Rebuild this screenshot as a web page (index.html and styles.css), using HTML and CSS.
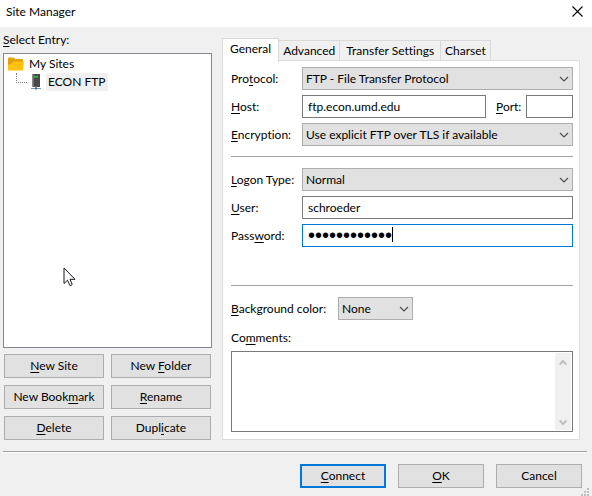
FILE: index.html
```html
<!DOCTYPE html>
<html lang="en">
<head>
    <meta charset="UTF-8">
    <meta name="viewport" content="width=device-width, initial-scale=1.0">
    <title>Site Manager</title>
    <link rel="stylesheet" href="styles.css">
</head>
<body>
    <header class="titlebar">
        <h1>Site Manager</h1>
        <button type="button" class="close" aria-label="Close">
            <svg width="11" height="11" viewBox="0 0 11 11"><path d="M.5 .5l10 10M10.5 .5l-10 10" stroke="#000" stroke-width="1.1"/></svg>
        </button>
    </header>

    <main class="content">
        <section class="sidebar">
            <h2><u>S</u>elect Entry:</h2>
            <div class="tree">
                <div class="tree-row">
                    <svg width="17" height="14" viewBox="0 0 17 14"><path d="M0 1.500Q0 .5 1 .5h4.500L7 2h7q1 0 1 1v10H0z" fill="#e3a008"/><path d="M4 6l1-1.500h11L15 13.500H0V7.500h2.500z" fill="#ffc20e"/></svg>
                    <span>My Sites</span>
                </div>
                <div class="tree-row child">
                    <span class="branch"></span>
                    <svg width="10" height="16" viewBox="0 0 10 16"><path d="M1 0h8v13H1z" fill="#4a4a4a"/><path d="M1 0h1.500v13H1z" fill="#8a8a8a"/><path d="M3 2h4v1.500H3z" fill="#2fc12f"/><path d="M5 12v2" stroke="#777"/><path d="M0 14.500h10" stroke="#7d97a8"/><path d="M4 13.500h2v2H4z" fill="#2f6f9f"/></svg>
                    <span class="selected">ECON FTP</span>
                </div>
                <svg class="pointer" width="13" height="20" viewBox="0 0 13 20"><path d="M1 1v15.500l3.500-3.300 2.300 5.100q1.200.7 2.400-.8L7 12.300h5z" fill="#fff" stroke="#15151f"/></svg>
            </div>
            <div class="actions">
                <button type="button"><u>N</u>ew Site</button>
                <button type="button">New <u>F</u>older</button>
                <button type="button">New Book<u>m</u>ark</button>
                <button type="button"><u>R</u>ename</button>
                <button type="button"><u>D</u>elete</button>
                <button type="button">Dupl<u>i</u>cate</button>
            </div>
        </section>

        <section class="settings">
            <div class="tabs" role="tablist">
                <button type="button" class="tab active" role="tab" aria-selected="true">General</button>
                <button type="button" class="tab" role="tab">Advanced</button>
                <button type="button" class="tab wide" role="tab">Transfer Settings</button>
                <button type="button" class="tab" role="tab">Charset</button>
            </div>
            <form class="panel" role="tabpanel">
                <div class="row">
                    <label for="protocol">Pro<u>t</u>ocol:</label>
                    <div class="dropdown">
                        <select id="protocol"><option>FTP - File Transfer Protocol</option></select>
                        <svg width="10" height="6" viewBox="0 0 10 6"><path d="M1 1l4 4 4-4"/></svg>
                    </div>
                </div>
                <div class="row">
                    <label for="host"><u>H</u>ost:</label>
                    <input type="text" id="host" value="ftp.econ.umd.edu">
                    <label class="port-label" for="port"><u>P</u>ort:</label>
                    <input type="text" class="port" id="port">
                </div>
                <div class="row">
                    <label for="encryption"><u>E</u>ncryption:</label>
                    <div class="dropdown">
                        <select id="encryption"><option>Use explicit FTP over TLS if available</option></select>
                        <svg width="10" height="6" viewBox="0 0 10 6"><path d="M1 1l4 4 4-4"/></svg>
                    </div>
                </div>
                <hr>
                <div class="row">
                    <label for="logon"><u>L</u>ogon Type:</label>
                    <div class="dropdown">
                        <select id="logon"><option>Normal</option></select>
                        <svg width="10" height="6" viewBox="0 0 10 6"><path d="M1 1l4 4 4-4"/></svg>
                    </div>
                </div>
                <div class="row">
                    <label for="user"><u>U</u>ser:</label>
                    <input type="text" id="user" value="schroeder">
                </div>
                <div class="row">
                    <label for="password">Pass<u>w</u>ord:</label>
                    <div class="password">
                        <input type="password" id="password" value="abcdefghijkl">
                        <span class="caret"></span>
                    </div>
                </div>
                <hr class="low">
                <div class="row color-row">
                    <label for="color"><u>B</u>ackground color:</label>
                    <div class="dropdown">
                        <select id="color"><option>None</option></select>
                        <svg width="10" height="6" viewBox="0 0 10 6"><path d="M1 1l4 4 4-4"/></svg>
                    </div>
                </div>
                <label class="comments-label" for="comments">Co<u>m</u>ments:</label>
                <div class="comments">
                    <textarea id="comments"></textarea>
                    <div class="scrollbar">
                        <svg width="8" height="7" viewBox="0 0 8 7"><path d="M.7 5.500L4 2l3.300 3.500"/></svg>
                        <svg width="8" height="7" viewBox="0 0 8 7"><path d="M.7 1.500L4 5l3.300-3.500"/></svg>
                    </div>
                </div>
            </form>
        </section>
    </main>

    <footer class="footer">
        <button type="button" class="default"><u>C</u>onnect</button>
        <button type="button"><u>O</u>K</button>
        <button type="button">Cancel</button>
        <svg class="grip" width="8" height="8" viewBox="0 0 8 8"><path d="M6 0h2v2H6zM3 3h2v2H3zM6 3h2v2H6zM0 6h2v2H0zM3 6h2v2H3zM6 6h2v2H6z" fill="#bfbfbf"/></svg>
    </footer>
</body>
</html>
```
FILE: styles.css
```css
* {
    box-sizing: border-box;
}
body {
    margin: 0;
    min-height: 100vh;
    display: flex;
    flex-direction: column;
    background-color: #f0f0f0;
    color: #000;
    font-family: Lato, "Open Sans", sans-serif;
    font-size: 12px;
    line-height: 16px;
    font-variant-ligatures: none;
}
h1, h2 {
    margin: 0;
    font-size: 12px;
    font-weight: 400;
}
button, input, select, textarea {
    margin: 0;
    font: inherit;
    font-variant-ligatures: none;
    color: inherit;
    border-radius: 0;
    outline: none;
}
u {
    text-underline-offset: 2px;
    text-decoration-thickness: 1px;
}
svg {
    display: block;
    flex: none;
}
button {
    height: 24px;
    padding: 0;
    background-color: #e1e1e1;
    border: 1px solid #adadad;
    white-space: nowrap;
}
.titlebar {
    display: flex;
    justify-content: space-between;
    height: 27px;
    padding: 4px 9px 0 6px;
    background-color: #fff;
}
.titlebar .close {
    height: 15px;
    background: none;
    border: none;
}
.content {
    flex: 1;
    display: flex;
    gap: 10px;
    padding: 5px 12px 11px 3px;
}
.sidebar {
    flex: none;
    width: 209px;
    display: flex;
    flex-direction: column;
}
.tree {
    position: relative;
    flex: 1;
    margin-top: 5px;
    padding: 1px 4px;
    background-color: #fff;
    border: 1px solid #828790;
}
.tree-row {
    display: flex;
    align-items: center;
    gap: 4px;
    height: 18px;
}
.child {
    padding-left: 8px;
}
.branch {
    width: 11px;
    height: 10px;
    margin-bottom: 8px;
    border-left: 1px dotted #808080;
    border-bottom: 1px dotted #808080;
}
.selected {
    height: 18px;
    padding: 1px 2px;
    margin-left: 1px;
    background-color: #f0f0f0;
}
.pointer {
    position: absolute;
    left: 59px;
    top: 213px;
}
.actions {
    display: grid;
    grid-template-columns: 1fr 1fr;
    gap: 7px;
    padding: 6px 1px 0;
}
.settings {
    flex: 1;
    min-width: 0;
    display: flex;
    flex-direction: column;
    padding-top: 6px;
}
.tabs {
    display: flex;
    align-items: flex-end;
    height: 23px;
}
.tab {
    height: 21px;
    padding: 0 4px;
    background-color: #f0f0f0;
    border: 1px solid #d9d9d9;
    border-left: none;
}
.tab.wide {
    padding: 0 6px;
}
.tab.active {
    position: relative;
    height: 24px;
    margin-bottom: -1px;
    padding: 0 7px 3px;
    background-color: #fff;
    border-left: 1px solid #d9d9d9;
    border-bottom: none;
}
.panel {
    flex: 1;
    display: flex;
    flex-direction: column;
    margin-top: -1px;
    padding: 6px 6px 7px 8px;
    background-color: #fff;
    border: 1px solid #dcdcdc;
}
.row {
    display: flex;
    align-items: center;
    margin-bottom: 5px;
}
.row label {
    width: 71px;
    flex: none;
    white-space: nowrap;
}
.row .port-label {
    width: 40px;
    padding-left: 10px;
}
.row input {
    flex: 1;
    min-width: 0;
    height: 23px;
    padding: 0 5px;
    background-color: #fff;
    border: 1px solid #7a7a7a;
}
.row .port {
    flex: none;
    width: 47px;
}
.dropdown, .password {
    position: relative;
    flex: 1;
    min-width: 0;
    display: flex;
}
.dropdown select {
    width: 100%;
    height: 23px;
    padding: 0 20px 0 3px;
    appearance: none;
    background-color: #e1e1e1;
    border: 1px solid #adadad;
}
.dropdown svg {
    position: absolute;
    right: 4px;
    top: 9px;
    fill: none;
    stroke: #505050;
    stroke-width: 1.2;
    pointer-events: none;
}
.password input {
    font-family: "Liberation Sans", sans-serif;
    font-size: 20px;
    border-color: #0078d7;
}
.caret {
    position: absolute;
    left: 90px;
    top: 3px;
    width: 1px;
    height: 15px;
    background-color: #000;
}
hr {
    width: 100%;
    height: 1px;
    margin: 5px 0 11px;
    border: none;
    background-color: #a0a0a0;
}
hr.low {
    margin-top: 33px;
}
.row.color-row {
    margin-bottom: 10px;
}
.color-row label {
    width: 107px;
}
.color-row .dropdown {
    flex: none;
    width: 75px;
}
.comments-label {
    margin-bottom: 5px;
}
.comments {
    flex: 1;
    display: flex;
    min-height: 60px;
    padding: 1px;
    border: 1px solid #7a7a7a;
}
.comments textarea {
    flex: 1;
    min-width: 0;
    resize: none;
    border: none;
}
.scrollbar {
    display: flex;
    flex-direction: column;
    justify-content: space-between;
    align-items: center;
    width: 16px;
    padding: 6px 0 4px;
    background-color: #f0f0f0;
}
.scrollbar path {
    fill: none;
    stroke: #bfbfbf;
    stroke-width: 2;
}
.footer {
    position: relative;
    display: flex;
    justify-content: flex-end;
    gap: 12px;
    margin: 0 5px 0 3px;
    padding: 12px 5px 8px;
    border-top: 1px solid #a0a0a0;
    box-shadow: inset 0 1px 0 #fff;
}
.footer button {
    width: 86px;
}
.footer .default {
    border: 2px solid #0078d7;
}
.grip {
    position: absolute;
    right: -2px;
    bottom: 0;
}
```
